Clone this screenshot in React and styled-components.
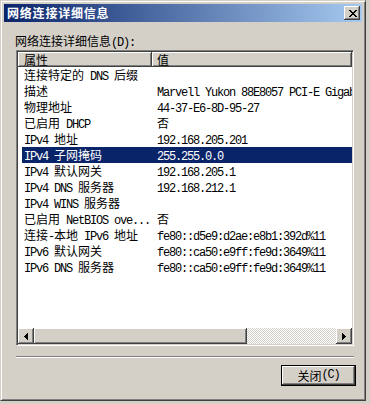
import React from "react";
import styled, { createGlobalStyle } from "styled-components";

const rows = [
  ["连接特定的 DNS 后缀", ""],
  ["描述", "Marvell Yukon 88E8057 PCI-E Gigabit Ethernet Controller"],
  ["物理地址", "44-37-E6-8D-95-27"],
  ["已启用 DHCP", "否"],
  ["IPv4 地址", "192.168.205.201"],
  ["IPv4 子网掩码", "255.255.0.0", true],
  ["IPv4 默认网关", "192.168.205.1"],
  ["IPv4 DNS 服务器", "192.168.212.1"],
  ["IPv4 WINS 服务器", ""],
  ["已启用 NetBIOS ove...", "否"],
  ["连接-本地 IPv6 地址", "fe80::d5e9:d2ae:e8b1:392d%11"],
  ["IPv6 默认网关", "fe80::ca50:e9ff:fe9d:3649%11"],
  ["IPv6 DNS 服务器", "fe80::ca50:e9ff:fe9d:3649%11"],
];

// latin runs get the narrow fixed-width face, like SimSun's half-width glyphs
const Txt = ({ text }) =>
  text.split(/([\x20-\x7e]+)/).map((part, i) =>
    /^[\x20-\x7e]+$/.test(part) ? <Ascii key={i}>{part}</Ascii> : part
  );

const ArrowLeft = () => (
  <svg width="4" height="7" viewBox="0 0 4 7" shapeRendering="crispEdges">
    <path d="M0 3h1v1H0z M1 2h1v3H1z M2 1h1v5H2z M3 0h1v7H3z" fill="#000" />
  </svg>
);

const ArrowRight = () => (
  <svg width="4" height="7" viewBox="0 0 4 7" shapeRendering="crispEdges">
    <path d="M3 3h1v1H3z M2 2h1v3H2z M1 1h1v5H1z M0 0h1v7H0z" fill="#000" />
  </svg>
);

const CloseGlyph = () => (
  <svg width="8" height="7" viewBox="0 0 8 7" shapeRendering="crispEdges">
    <path
      d="M0 0h2v1H0z M6 0h2v1H6z M1 1h2v1H1z M5 1h2v1H5z M2 2h4v1H2z M3 3h2v1H3z M2 4h4v1H2z M1 5h2v1H1z M5 5h2v1H5z M0 6h2v1H0z M6 6h2v1H6z"
      fill="#000"
    />
  </svg>
);

export default function App() {
  return (
    <>
      <GlobalStyle />
      <Window>
        <TitleBar>
          <Title>网络连接详细信息</Title>
          <CaptionButton>
            <CloseGlyph />
          </CaptionButton>
        </TitleBar>
        <Client>
          <Label>
            <Txt text="网络连接详细信息(D):" />
          </Label>
          <ListView>
            <Header>
              <HeaderCell $width={134} $pad={6}>属性</HeaderCell>
              <HeaderCell $width={200} $pad={5}>值</HeaderCell>
            </Header>
            <Body>
              {rows.map(([name, value, selected]) => (
                <Row key={name} $selected={selected}>
                  <NameCell>
                    <Txt text={name} />
                  </NameCell>
                  <ValueCell>
                    <Txt text={value} />
                  </ValueCell>
                </Row>
              ))}
            </Body>
            <ScrollBar>
              <ScrollButton>
                <ArrowLeft />
              </ScrollButton>
              <Track>
                <Thumb />
              </Track>
              <ScrollButton>
                <ArrowRight />
              </ScrollButton>
            </ScrollBar>
          </ListView>
          <Separator />
          <ButtonRow>
            <DefaultButton>
              <Txt text="关闭(C)" />
            </DefaultButton>
          </ButtonRow>
        </Client>
      </Window>
    </>
  );
}

const GlobalStyle = createGlobalStyle`
  html, body {
    margin: 0;
    padding: 0;
    background: #d4d0c8;
  }
  body {
    font-family: "Noto Sans CJK SC", "Liberation Sans", sans-serif;
    font-size: 12px;
    color: #000;
  }
`;

const raised = `
  box-shadow: inset -1px -1px #404040, inset 1px 1px #fff,
    inset -2px -2px #808080, inset 2px 2px #d4d0c8;
`;

const Ascii = styled.span`
  font-family: "Liberation Mono", monospace;
  letter-spacing: -1.2px;
`;

const Window = styled.div`
  width: 366px;
  height: 401px;
  box-sizing: border-box;
  padding: 3px;
  background: #d4d0c8;
  border: 1px solid;
  border-color: #d4d0c8 #404040 #404040 #d4d0c8;
  box-shadow: inset 1px 1px #fff, inset -1px -1px #808080;
  display: flex;
  flex-direction: column;
`;

const TitleBar = styled.div`
  height: 18px;
  display: flex;
  align-items: center;
  padding-left: 3px;
  background: linear-gradient(to right, #0a246a, #a6caf0);
`;

const Title = styled.span`
  color: #fff;
  font-weight: bold;
  font-size: 12px;
  letter-spacing: 0.8px;
  line-height: 18px;
`;

const CaptionButton = styled.div`
  margin-left: auto;
  margin-right: 2px;
  width: 16px;
  height: 14px;
  display: flex;
  align-items: center;
  justify-content: center;
  padding-left: 1px;
  box-sizing: border-box;
  background: #d4d0c8;
  ${raised}
`;

const Client = styled.div`
  flex: 1;
  display: flex;
  flex-direction: column;
  padding: 11px 6px 0 12px;
`;

const Label = styled.div`
  height: 16px;
  line-height: 16px;
  margin: 0 0 1px -1px;
  white-space: nowrap;
`;

const ListView = styled.div`
  width: 338px;
  height: 296px;
  box-sizing: border-box;
  padding: 1px;
  background: #fff;
  border: 1px solid;
  border-color: #808080 #fff #fff #808080;
  box-shadow: inset 1px 1px #404040, inset -1px -1px #d4d0c8;
  display: flex;
  flex-direction: column;
  overflow: hidden;
`;

const Header = styled.div`
  display: flex;
  height: 15px;
  flex-shrink: 0;
`;

const HeaderCell = styled.div`
  width: ${(p) => p.$width}px;
  padding-left: ${(p) => p.$pad}px;
  box-sizing: border-box;
  line-height: 15px;
  background: #d4d0c8;
  box-shadow: inset -1px -1px #404040, inset 1px 1px #fff,
    inset -2px -2px #808080;
`;

const Body = styled.div`
  flex: 1;
  overflow: hidden;
`;

const Row = styled.div`
  display: flex;
  height: 16px;
  line-height: 16px;
  margin-left: 4px;
  white-space: nowrap;
  overflow: hidden;
  background: ${(p) => (p.$selected ? "#0a246a" : "transparent")};
  color: ${(p) => (p.$selected ? "#fff" : "#000")};
`;

const NameCell = styled.div`
  width: 130px;
  flex-shrink: 0;
  padding-left: 2px;
  box-sizing: border-box;
  overflow: hidden;
`;

const ValueCell = styled.div`
  flex: 1;
  padding-left: 5px;
  overflow: hidden;
`;

const ScrollBar = styled.div`
  display: flex;
  height: 16px;
  flex-shrink: 0;
`;

const ScrollButton = styled.div`
  width: 16px;
  height: 16px;
  flex-shrink: 0;
  display: flex;
  align-items: center;
  justify-content: center;
  background: #d4d0c8;
  ${raised}
`;

const Track = styled.div`
  flex: 1;
  display: flex;
  background: repeating-conic-gradient(#fff 0 25%, #d4d0c8 0 50%) 0 0 / 2px 2px;
`;

const Thumb = styled.div`
  width: 213px;
  height: 16px;
  background: #d4d0c8;
  ${raised}
`;

const Separator = styled.div`
  width: 338px;
  margin-top: 10px;
  border-top: 1px solid #808080;
  border-bottom: 1px solid #fff;
`;

const ButtonRow = styled.div`
  display: flex;
  justify-content: flex-end;
  margin-top: 7px;
`;

const DefaultButton = styled.div`
  width: 75px;
  height: 21px;
  box-sizing: border-box;
  border: 1px solid #000;
  background: #d4d0c8;
  display: flex;
  align-items: center;
  justify-content: center;
  line-height: 19px;
  box-shadow: inset -1px -1px #404040, inset 1px 1px #fff,
    inset -2px -2px #808080;
`;
